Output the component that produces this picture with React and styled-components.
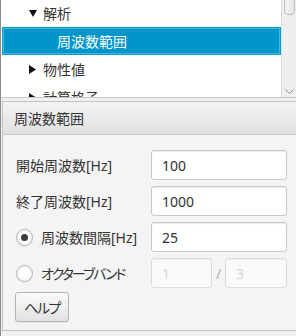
import styled, { createGlobalStyle } from "styled-components";

const GlobalStyle = createGlobalStyle`
  html, body {
    margin: 0;
    padding: 0;
    background: #f0f0f0;
  }
  body {
    font-family: "Noto Sans", "Noto Sans CJK JP", sans-serif;
    font-size: 14px;
    color: #333;
  }
`;

const Window = styled.div`
  width: 296px;
  height: 336px;
  display: flex;
  flex-direction: column;
  overflow: hidden;
  background: #f0f0f0;
  border-left: 1px solid #8c8c8c;
  box-sizing: border-box;
`;

const Tree = styled.div`
  height: 98px;
  flex: none;
  display: flex;
  background: #fff;
  border-bottom: 1px solid #c8c8c8;
  box-sizing: border-box;
`;

const TreeList = styled.div`
  flex: 1;
  overflow: hidden;
  padding-left: 1px;
  margin-top: -1px;
`;

const TreeRow = styled.div`
  height: 28px;
  display: flex;
  align-items: center;
  box-sizing: border-box;
  padding-left: ${(p) => p.$indent}px;
  background: ${(p) => (p.$selected ? "#0096c9" : "transparent")};
  color: ${(p) => (p.$selected ? "#fff" : "#333")};
  box-shadow: ${(p) =>
    p.$selected ? "inset 0 0 0 1px #039ed3, inset 0 0 0 2px #43b6e0" : "none"};
`;

const Arrow = styled.span`
  width: 14px;
  display: flex;
  align-items: center;
`;

const ScrollBar = styled.div`
  width: 13px;
  flex: none;
  background: #efefef;
  border-left: 1px solid #dcdcdc;
  display: flex;
  flex-direction: column;
  justify-content: space-between;
  align-items: center;
  padding: 0 0 2px 1px;
`;

const Thumb = styled.div`
  width: 11px;
  height: 17px;
  margin-top: -2px;
  background: linear-gradient(to right, #f4f4f4, #e4e4e4);
  border: 1px solid #bdbdbd;
  border-radius: 4px;
  box-sizing: border-box;
`;

const Strip = styled.div`
  height: 3px;
  flex: none;
`;

const Panel = styled.div`
  flex: 1;
  display: flex;
  flex-direction: column;
  margin-left: 1px;
  margin-bottom: 5px;
  border: 1px solid #c4c4c4;
  border-right: none;
`;

const Header = styled.div`
  height: 32px;
  flex: none;
  display: flex;
  align-items: center;
  padding-left: 11px;
  background: linear-gradient(#f3f3f3, #e1e1e1);
  border-bottom: 1px solid #c8c8c8;
`;

const Content = styled.div`
  flex: 1;
  background: #f4f4f4;
  padding: 15px 0 0 13px;
`;

const Form = styled.div`
  display: grid;
  grid-template-columns: 135px 136px;
  grid-auto-rows: 30px;
  row-gap: 6px;
`;

const Label = styled.label`
  display: flex;
  align-items: center;
  gap: 8px;
  white-space: nowrap;
`;

const Kana = styled.span`
  font-feature-settings: "palt";
  letter-spacing: ${(p) => p.$tight || 0}px;
`;

const Radio = styled.span`
  width: 17px;
  height: 17px;
  flex: none;
  border-radius: 50%;
  box-sizing: border-box;
  border: 1px solid #b5b5b5;
  background: radial-gradient(circle, #fff 40%, #e9e9e9 100%);
  box-shadow: 0 1px 0 #e6e6e6;
  display: flex;
  align-items: center;
  justify-content: center;
  &::after {
    content: "";
    width: 7px;
    height: 7px;
    border-radius: 50%;
    background: ${(p) => (p.$checked ? "#3a3a3a" : "transparent")};
  }
`;

const Field = styled.div`
  height: 30px;
  box-sizing: border-box;
  border: 1px solid #c9c9c9;
  border-radius: 3px;
  background: #fff;
  box-shadow: inset 0 1px 1px #ececec;
  display: flex;
  align-items: center;
  padding-left: 10px;
  color: ${(p) => (p.$disabled ? "#c0c0c0" : "#333")};
  opacity: ${(p) => (p.$disabled ? 0.55 : 1)};
`;

const Pair = styled.div`
  display: grid;
  grid-template-columns: 61px 13px 62px;
  align-items: center;
`;

const Slash = styled.span`
  text-align: center;
  color: #b0b0b0;
`;

const Button = styled.button`
  margin: 4px 0 0 -1px;
  width: 54px;
  height: 30px;
  font: inherit;
  color: #333;
  border: 1px solid #b3b3b3;
  border-radius: 3px;
  background: linear-gradient(#fafafa, #e2e2e2);
  box-shadow: 0 1px 0 #e8e8e8;
  padding: 0;
`;

function Down() {
  return (
    <svg width="8" height="7" viewBox="0 0 8 7">
      <path d="M0 0 H8 L4 7 Z" fill="#111" />
    </svg>
  );
}

function Right() {
  return (
    <svg width="7" height="9" viewBox="0 0 7 9">
      <path d="M0 0 L7 4.5 L0 9 Z" fill="#111" />
    </svg>
  );
}

export default function App() {
  return (
    <>
      <GlobalStyle />
      <Window>
        <Tree>
          <TreeList>
            <TreeRow $indent={27}>
              <Arrow><Down /></Arrow>解析
            </TreeRow>
            <TreeRow $indent={55} $selected>周波数範囲</TreeRow>
            <TreeRow $indent={27}>
              <Arrow><Right /></Arrow>物性値
            </TreeRow>
            <TreeRow $indent={27}>
              <Arrow><Right /></Arrow>計算格子
            </TreeRow>
          </TreeList>
          <ScrollBar>
            <Thumb />
            <svg width="9" height="6" viewBox="0 0 9 6">
              <path d="M0.5 0.5 L4.5 4.5 L8.5 0.5" stroke="#888" fill="none" />
            </svg>
          </ScrollBar>
        </Tree>
        <Strip />
        <Panel>
          <Header>周波数範囲</Header>
          <Content>
            <Form>
              <Label>開始周波数[Hz]</Label>
              <Field>100</Field>
              <Label>終了周波数[Hz]</Label>
              <Field>1000</Field>
              <Label><Radio $checked />周波数間隔[Hz]</Label>
              <Field>25</Field>
              <Label><Radio /><Kana $tight={-2}>オクターブバンド</Kana></Label>
              <Pair>
                <Field $disabled>1</Field>
                <Slash>/</Slash>
                <Field $disabled>3</Field>
              </Pair>
            </Form>
            <Button><Kana $tight={-1.5}>ヘルプ</Kana></Button>
          </Content>
        </Panel>
      </Window>
    </>
  );
}
